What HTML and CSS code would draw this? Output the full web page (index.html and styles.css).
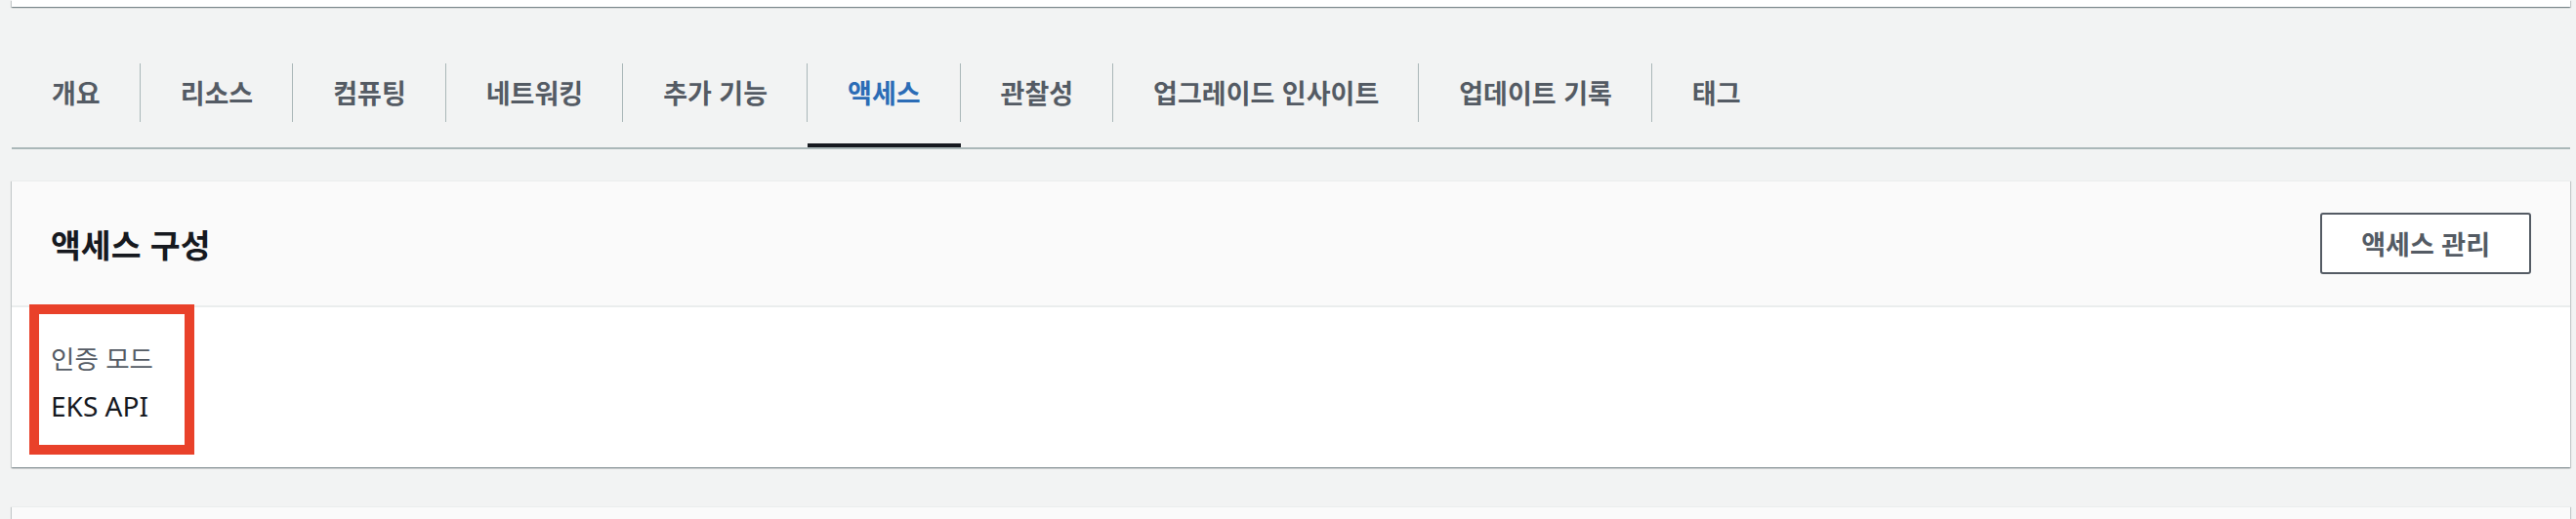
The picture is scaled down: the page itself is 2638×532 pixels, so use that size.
FILE: index.html
```html
<!DOCTYPE html>
<html lang="ko">

<head>
	<meta charset="utf-8">
	<title>EKS 클러스터 - 액세스</title>
	<link rel="stylesheet" href="styles.css">
</head>

<body>
	<div class="page">
		<div class="card card-cut"></div>

		<nav class="tabs">
			<a class="tab"><span>개요</span></a>
			<a class="tab"><span>리소스</span></a>
			<a class="tab"><span>컴퓨팅</span></a>
			<a class="tab"><span>네트워킹</span></a>
			<a class="tab"><span>추가 기능</span></a>
			<a class="tab active"><span>액세스</span></a>
			<a class="tab"><span>관찰성</span></a>
			<a class="tab"><span>업그레이드 인사이트</span></a>
			<a class="tab"><span>업데이트 기록</span></a>
			<a class="tab"><span>태그</span></a>
		</nav>

		<section class="card">
			<div class="card-header">
				<h2>액세스 구성</h2>
				<button class="btn" type="button">액세스 관리</button>
			</div>
			<div class="card-body">
				<div class="field-label">인증 모드</div>
				<div class="field-value">EKS API</div>
				<!-- annotation box drawn over the field -->
				<div class="highlight"></div>
			</div>
		</section>

		<section class="card card-next">
			<div class="card-header card-header-cut"></div>
		</section>
	</div>
</body>

</html>
```

FILE: styles.css
```css
body {
    margin: 0;
    background: #f2f3f3;
    font-family: "Noto Sans CJK KR", sans-serif;
    color: #16191f;
    overflow: hidden;
}
.page {
    padding: 0 6px 0 12px;
}
.card {
    background: #ffffff;
    border-top: 1px solid #eaeded;
    box-shadow: 0 1px 1px 0 rgba(0, 28, 36, 0.3), 1px 1px 1px 0 rgba(0, 28, 36, 0.15), -1px 1px 1px 0 rgba(0, 28, 36, 0.15);
}
.card-cut {
    height: 7px;
    border-top: none;
}

/* tabs */
.tabs {
    display: flex;
    margin-top: 58px;
    border-bottom: 2px solid #aab7b8;
}
.tab {
    display: block;
    padding-bottom: 22px;
    border-bottom: 4px solid transparent;
    color: #545b64;
    font-size: 27px;
    font-weight: 700;
    text-decoration: none;
    white-space: nowrap;
}
.tab span {
    display: block;
    line-height: 60px;
    padding: 0 40px 0 41px;
    border-right: 1px solid #aab7b8;
}
.tab:last-child span {
    border-right: none;
}
.tab.active {
    color: #2b6cb6;
    border-bottom-color: #16191f;
}

/* card */
.tabs + .card {
    margin-top: 32px;
}
.card-header {
    display: flex;
    align-items: center;
    justify-content: space-between;
    height: 127px;
    padding: 0 40px;
    background: #fafafa;
    border-bottom: 2px solid #eaeded;
}
.card-header h2 {
    margin: 0;
    font-size: 33.5px;
    font-weight: 700;
    line-height: 40px;
}
.btn {
    height: 63px;
    padding: 0 40px;
    background: #ffffff;
    border: 2px solid #545b64;
    border-radius: 3px;
    color: #545b64;
    font-family: "Noto Sans CJK KR", sans-serif;
    font-size: 27px;
    font-weight: 700;
}
.card-body {
    position: relative;
    padding: 34px 40px 43px;
}
.field-label {
    color: #545b64;
    font-size: 26.5px;
    line-height: 36px;
}
.field-value {
    margin-top: 11px;
    font-family: "Noto Sans", "Noto Sans CJK KR", sans-serif;
    font-size: 28px;
    line-height: 40px;
}
.highlight {
    position: absolute;
    top: -3px;
    left: 18px;
    width: 149px;
    height: 134px;
    border: 10px solid #e9412a;
}
.card-next {
    margin-top: 40px;
}
.card-header-cut {
    height: 12px;
    border-bottom: none;
}
```
